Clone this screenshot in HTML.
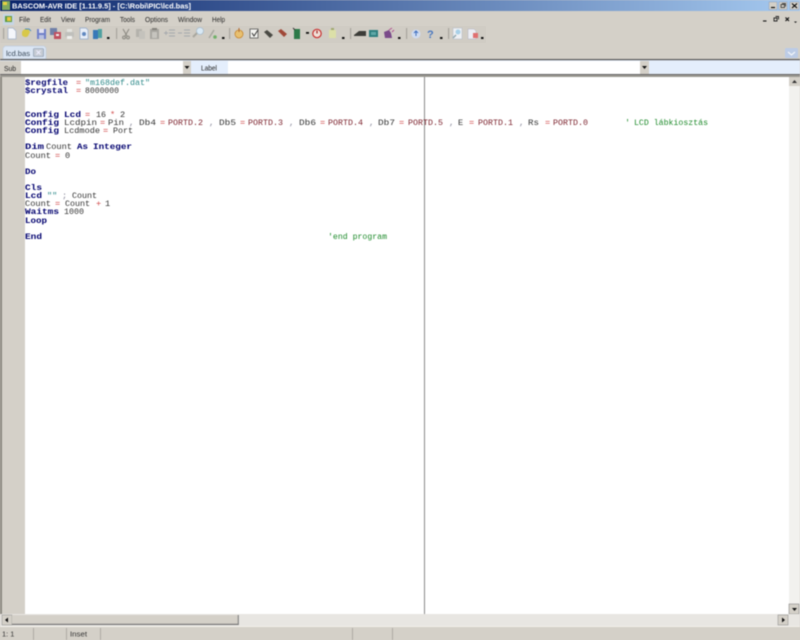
<!DOCTYPE html>
<html><head><meta charset="utf-8"><title>BASCOM-AVR IDE</title>
<style>
html,body{margin:0;padding:0;width:800px;height:640px;overflow:hidden;background:#d4d0c8}
svg{display:block;filter:blur(.4px)}
</style></head><body>
<svg width="800" height="640" viewBox="0 0 800 640" xmlns="http://www.w3.org/2000/svg">
<defs><linearGradient id="t" x1="0" x2="1" y1="0" y2="0"><stop offset="0" stop-color="#0a246a"/><stop offset="1" stop-color="#a6caf0"/></linearGradient></defs>
<rect width="800" height="640" fill="#d4d0c8"/>
<!-- title bar -->
<rect x="0" y="0" width="800" height="11" fill="url(#t)"/>
<rect x="2" y="1" width="8" height="9" fill="#7fa860"/><rect x="3" y="2" width="4" height="3" fill="#e8d040"/>
<text x="12" y="8.5" font-family="Liberation Sans,sans-serif" font-size="7.6" font-weight="bold" fill="#fff" textLength="179" lengthAdjust="spacingAndGlyphs">BASCOM-AVR IDE [1.11.9.5] - [C:\Robi\PIC\lcd.bas]</text>
<g fill="#d4d0c8" stroke="#8a94a8" stroke-width=".4"><rect x="769" y="2" width="8" height="7.500"/><rect x="779" y="2" width="8" height="7.500"/><rect x="790" y="2" width="9" height="7.500"/></g>
<path d="M771 7.500h4" stroke="#000" stroke-width="1.100"/><path d="M781 4.500h3.500v3h-3.500zM782 3.500h3.500v3" fill="none" stroke="#222" stroke-width=".7"/><path d="M792 3.500l5 4.500M797 3.500l-5 4.500" stroke="#000" stroke-width="1.100"/>
<!-- menu -->
<rect x="3" y="14" width="11" height="11" fill="#c6d5e4"/><rect x="5" y="16" width="7" height="6" fill="#5c9a40"/><rect x="7" y="17" width="4" height="4" fill="#e8c840"/>
<g font-family="Liberation Sans,sans-serif" font-size="7.4" fill="#2a2a2a">
<text x="19" y="22" textLength="11" lengthAdjust="spacingAndGlyphs">File</text>
<text x="40" y="22" textLength="11" lengthAdjust="spacingAndGlyphs">Edit</text>
<text x="61" y="22" textLength="14" lengthAdjust="spacingAndGlyphs">View</text>
<text x="85" y="22" textLength="25" lengthAdjust="spacingAndGlyphs">Program</text>
<text x="120" y="22" textLength="15" lengthAdjust="spacingAndGlyphs">Tools</text>
<text x="145" y="22" textLength="23" lengthAdjust="spacingAndGlyphs">Options</text>
<text x="178" y="22" textLength="24" lengthAdjust="spacingAndGlyphs">Window</text>
<text x="212" y="22" textLength="13" lengthAdjust="spacingAndGlyphs">Help</text>
</g>
<path d="M763 21h3.500" stroke="#111" stroke-width="1.100"/>
<path d="M774 18h3v3h-3zM775.500 16.500h3v3" fill="none" stroke="#222" stroke-width=".9"/>
<path d="M785.500 17.500l3.500 3.500M789 17.500l-3.500 3.500" stroke="#111" stroke-width="1.200"/>
<path d="M794 21.500h3l-1.500 1.500z" fill="#111"/>
<!-- toolbar strip -->
<rect x="0" y="26" width="486" height="17" fill="#d0ccc4"/>
<g fill="#a8a59e">
<rect x="3" y="28" width="1.200" height="11"/><rect x="116" y="28" width="1.200" height="11"/><rect x="229" y="28" width="1.200" height="11"/><rect x="350" y="28" width="1.200" height="11"/><rect x="406" y="28" width="1.200" height="11"/><rect x="448" y="28" width="1.200" height="11"/>
</g>
<!-- toolbar icons -->
<g transform="translate(0,-1)">
<path d="M8 29h5l3 3v8h-8z" fill="#f4f6fa" stroke="#a0b0c8" stroke-width=".7"/>
<path d="M22 33c1-3 5-4 7-2l1 2-2 4c-2 2-5 1-6-1z" fill="#d8c848"/><path d="M25 30l4 0 2 2" stroke="#5090c0" fill="none"/>
<rect x="37" y="30" width="9" height="10" fill="#7080c8"/><rect x="39" y="30" width="5" height="4" fill="#e0e0f0"/><rect x="39" y="36" width="5" height="4" fill="#b8c0e0"/>
<rect x="50" y="29" width="7" height="7" fill="#7080a8"/><rect x="54" y="33" width="7" height="7" fill="#c05060"/><rect x="56" y="35" width="3" height="2" fill="#eee"/>
<rect x="65" y="33" width="9" height="5" fill="#c0c0bc" rx="1"/><rect x="67" y="30" width="5" height="3" fill="#e4e4e0"/><rect x="67" y="37" width="5" height="3" fill="#f0f0ee"/>
<path d="M80 29h6l2 2v9h-8z" fill="#e8eef8" stroke="#90a8c8" stroke-width=".7"/><circle cx="84" cy="35" r="2" fill="#6088c0"/>
<rect x="93" y="31" width="5" height="9" fill="#3878b8"/><rect x="98" y="30" width="4" height="9" fill="#50a0a0"/>
<rect x="107" y="38" width="2.500" height="2" fill="#111"/>
<!-- cut copy paste etc -->
<path d="M123 30l4 7M129 30l-4 7" stroke="#8a8880" stroke-width="1"/><circle cx="124" cy="38.500" r="1.400" fill="none" stroke="#8a8880"/><circle cx="128" cy="38.500" r="1.400" fill="none" stroke="#8a8880"/>
<rect x="136" y="30" width="6" height="8" fill="#b4b2ac"/><rect x="139" y="32" width="6" height="8" fill="#c4c2bc"/>
<rect x="150" y="30" width="9" height="10" fill="#a8a6a0"/><rect x="152" y="29" width="5" height="2" fill="#85837d"/><rect x="152" y="33" width="5" height="6" fill="#c6c4be"/>
<g stroke="#a4a8ac" stroke-width=".9"><path d="M164 34h4M166 32v4M169 31h6M169 34h6M169 37h6"/><path d="M178 34h4M184 31h6M184 34h6M184 37h6"/></g>
<path d="M193 38l4-4" stroke="#a8a69e" stroke-width="2"/><circle cx="200" cy="32" r="3.500" fill="#d8e8f4" stroke="#a8bccc" stroke-width=".8"/>
<path d="M209 39l5-8" stroke="#a8a8a0" stroke-width="1.500"/><circle cx="215" cy="38" r="1.800" fill="#70b068"/>
<rect x="222" y="38" width="2.500" height="2" fill="#111"/>
<circle cx="239" cy="35" r="4" fill="#e8c070" stroke="#c88830" stroke-width=".8"/><path d="M239 29v4" stroke="#b06830"/>
<rect x="250" y="30" width="8" height="9" fill="#f4f4f0" stroke="#555" stroke-width=".8"/><path d="M252 34l2 3 4-6" stroke="#333" fill="none"/>
<path d="M264 33l3-2 6 5-3 3z" fill="#4a4a44"/>
<path d="M278 32l3-2 6 5-3 3z" fill="#a04838"/>
<rect x="294" y="30" width="6" height="10" fill="#2c7a48"/><path d="M293 29l2 2" stroke="#333"/>
<rect x="306" y="33" width="3" height="1.800" fill="#111"/>
<circle cx="317" cy="34.500" r="4.200" fill="#f0e0d8" stroke="#c83030" stroke-width="1.200"/><path d="M317 31.500v3" stroke="#a02020" stroke-width="1.200"/>
<rect x="329" y="31" width="7" height="8" fill="#dce0a8"/><rect x="331" y="29" width="3" height="2" fill="#a0a870"/>
<rect x="342" y="38" width="2.500" height="2" fill="#111"/>
<path d="M354 36l5-4h7v5h-12z" fill="#3c3c38"/>
<rect x="369" y="31" width="9" height="7" fill="#2f7f80"/><rect x="371" y="33" width="5" height="3" fill="#60a8a8"/>
<path d="M384 33l5-2 2 3 1 5h-7z" fill="#7a4a8a"/><path d="M389 31l3-2M392 33l2-2" stroke="#b05090"/>
<rect x="398" y="38" width="2.500" height="2" fill="#111"/>
<circle cx="416" cy="35" r="4.500" fill="#d0dcf0"/><path d="M416 32v5M414 34l2-2 2 2" stroke="#4070c0" fill="none"/>
<text x="427" y="39" font-family="Liberation Sans,sans-serif" font-size="11" font-weight="bold" fill="#4a78c0">?</text>
<rect x="440" y="38" width="2.500" height="2" fill="#111"/>
<rect x="453" y="29" width="9" height="11" fill="#eef0f4" stroke="#b0b8c4" stroke-width=".5"/><circle cx="458" cy="33" r="2.500" fill="#a8d0e8"/><path d="M456 36l-3 3" stroke="#90a8b0" stroke-width="1.500"/>
<path d="M468 30h6l2 2v8h-8z" fill="#eceef4" stroke="#b0b0c0" stroke-width=".5"/><rect x="473" y="34" width="5" height="5" fill="#e07070"/>
<rect x="481" y="38" width="2.500" height="2" fill="#111"/>
</g>
<!-- tab -->
<path d="M3 59v-11l2-2h39l2 2v11z" fill="#dbe6f4" stroke="#c0ccdc" stroke-width=".7"/>
<text x="6" y="56" font-family="Liberation Sans,sans-serif" font-size="7.6" fill="#3c4c5c" textLength="24" lengthAdjust="spacingAndGlyphs">lcd.bas</text>
<rect x="33.500" y="48.500" width="10" height="8" rx="1" fill="#c6ccd4" stroke="#8090a8" stroke-width=".6"/><path d="M36.500 50.500l4 4M40.500 50.500l-4 4" stroke="#eef" stroke-width="1"/>
<rect x="785" y="48" width="13" height="10" rx="1" fill="#bccce6"/><path d="M788 52l3.500 3 3.500-3" fill="none" stroke="#f4f6fa" stroke-width="1.200"/>
<!-- sub bar -->
<rect x="0" y="60" width="800" height="15" fill="#e4eefc"/>
<rect x="0" y="59" width="800" height="1.200" fill="#555"/>
<rect x="0" y="74" width="800" height="1.200" fill="#666"/>
<rect x="0" y="61" width="21" height="13" fill="#d4d0c8"/>
<text x="4" y="71" font-family="Liberation Sans,sans-serif" font-size="7.4" fill="#222" textLength="12" lengthAdjust="spacingAndGlyphs">Sub</text>
<rect x="21" y="61" width="162" height="13" fill="#fff"/>
<rect x="183" y="61" width="8" height="13" fill="#d4d0c8"/><path d="M184.500 66h5l-2.500 3z" fill="#111"/>
<text x="201" y="70.500" font-family="Liberation Sans,sans-serif" font-size="7.400" fill="#222" textLength="16" lengthAdjust="spacingAndGlyphs">Label</text>
<rect x="228" y="61" width="412" height="13" fill="#fff"/>
<rect x="640" y="61" width="9" height="13" fill="#d4d0c8"/><path d="M642 66h5l-2.500 3z" fill="#111"/>
<!-- editor -->
<rect x="0" y="75" width="800" height="2" fill="#9a9892"/>
<rect x="25" y="77" width="764" height="537" fill="#fff"/>
<rect x="0" y="77" width="2" height="537" fill="#8a8880"/>
<rect x="2" y="77" width="23" height="537" fill="#d4d0c8"/>
<rect x="424" y="77" width="1" height="537" fill="#8a8a8a"/>
<g font-family="Liberation Mono,monospace" font-size="8.600" fill="#333">
<g font-weight="bold" fill="#00006e"><text x="25" y="85" textLength="43" lengthAdjust="spacingAndGlyphs">$regfile</text><text x="25" y="93" textLength="43" lengthAdjust="spacingAndGlyphs">$crystal</text>
<text x="25" y="117" textLength="34" lengthAdjust="spacingAndGlyphs">Config</text><text x="64" y="117" textLength="17" lengthAdjust="spacingAndGlyphs">Lcd</text>
<text x="25" y="125" textLength="34" lengthAdjust="spacingAndGlyphs">Config</text>
<text x="25" y="133" textLength="34" lengthAdjust="spacingAndGlyphs">Config</text>
<text x="25" y="149" textLength="19" lengthAdjust="spacingAndGlyphs">Dim</text><text x="77" y="149" textLength="11" lengthAdjust="spacingAndGlyphs">As</text><text x="93" y="149" textLength="39" lengthAdjust="spacingAndGlyphs">Integer</text>
<text x="25" y="174" textLength="11" lengthAdjust="spacingAndGlyphs">Do</text>
<text x="25" y="190" textLength="17" lengthAdjust="spacingAndGlyphs">Cls</text>
<text x="25" y="198" textLength="17" lengthAdjust="spacingAndGlyphs">Lcd</text>
<text x="25" y="214" textLength="34" lengthAdjust="spacingAndGlyphs">Waitms</text>
<text x="25" y="223" textLength="22" lengthAdjust="spacingAndGlyphs">Loop</text>
<text x="25" y="239" textLength="17" lengthAdjust="spacingAndGlyphs">End</text></g>
<g fill="#d04848"><text x="76" y="85">=</text><text x="76" y="93">=</text><text x="85" y="117">=</text><text x="110" y="117">*</text><text x="100" y="125">=</text><text x="160" y="125">=</text><text x="240" y="125">=</text><text x="320" y="125">=</text><text x="399" y="125">=</text><text x="469" y="125">=</text><text x="545" y="125">=</text><text x="103" y="133">=</text><text x="55" y="158">=</text><text x="55" y="206">=</text><text x="96" y="206">+</text></g>
<g fill="#2e8a8a"><text x="85" y="85" textLength="65" lengthAdjust="spacingAndGlyphs">"m168def.dat"</text><text x="47" y="198">""</text></g>
<text x="85" y="93" textLength="34" lengthAdjust="spacingAndGlyphs">8000000</text>
<text x="96" y="117" textLength="10" lengthAdjust="spacingAndGlyphs">16</text><text x="120" y="117">2</text>
<text x="64" y="125" textLength="33" lengthAdjust="spacingAndGlyphs">Lcdpin</text><text x="108" y="125" textLength="16" lengthAdjust="spacingAndGlyphs">Pin</text>
<g fill="#88889a"><text x="129" y="125">,</text><text x="209" y="125">,</text><text x="289" y="125">,</text><text x="369" y="125">,</text><text x="449" y="125">,</text><text x="519" y="125">,</text><text x="62" y="198">;</text></g>
<text x="139" y="125" textLength="17" lengthAdjust="spacingAndGlyphs">Db4</text><text x="219" y="125" textLength="17" lengthAdjust="spacingAndGlyphs">Db5</text><text x="299" y="125" textLength="17" lengthAdjust="spacingAndGlyphs">Db6</text><text x="378" y="125" textLength="17" lengthAdjust="spacingAndGlyphs">Db7</text><text x="458" y="125">E</text><text x="528" y="125" textLength="11" lengthAdjust="spacingAndGlyphs">Rs</text>
<g fill="#7a1f2a"><text x="168" y="125" textLength="35" lengthAdjust="spacingAndGlyphs">PORTD.2</text><text x="248" y="125" textLength="35" lengthAdjust="spacingAndGlyphs">PORTD.3</text><text x="328" y="125" textLength="35" lengthAdjust="spacingAndGlyphs">PORTD.4</text><text x="408" y="125" textLength="35" lengthAdjust="spacingAndGlyphs">PORTD.5</text><text x="478" y="125" textLength="35" lengthAdjust="spacingAndGlyphs">PORTD.1</text><text x="553" y="125" textLength="35" lengthAdjust="spacingAndGlyphs">PORTD.0</text></g>
<g fill="#1d8a2a"><text x="625" y="125">'</text><text x="634" y="125" textLength="74" lengthAdjust="spacingAndGlyphs">LCD lábkiosztás</text><text x="328" y="239" textLength="59" lengthAdjust="spacingAndGlyphs">'end program</text></g>
<text x="64" y="133" textLength="36" lengthAdjust="spacingAndGlyphs">Lcdmode</text><text x="113" y="133" textLength="20" lengthAdjust="spacingAndGlyphs">Port</text>
<text x="46" y="149" textLength="26" lengthAdjust="spacingAndGlyphs">Count</text>
<text x="25" y="158" textLength="26" lengthAdjust="spacingAndGlyphs">Count</text><text x="65" y="158">0</text>
<text x="72" y="198" textLength="25" lengthAdjust="spacingAndGlyphs">Count</text>
<text x="25" y="206" textLength="26" lengthAdjust="spacingAndGlyphs">Count</text><text x="65" y="206" textLength="25" lengthAdjust="spacingAndGlyphs">Count</text><text x="105" y="206">1</text>
<text x="64" y="214" textLength="20" lengthAdjust="spacingAndGlyphs">1000</text>
</g>
<!-- v scrollbar -->
<rect x="789" y="77" width="11" height="537" fill="#f2f1ee"/>
<rect x="789" y="77" width="11" height="9" fill="#d4d0c8"/>
<path d="M792 83h5l-2.500-3z" fill="#333"/>
<rect x="789" y="604" width="10" height="10" fill="#d4d0c8" stroke="#777" stroke-width=".5"/>
<path d="M792 608h5l-2.500 3z" fill="#111"/>
<!-- h scrollbar -->
<rect x="0" y="614" width="800" height="12" fill="#e8e6e2"/>
<rect x="2" y="615" width="10" height="10" fill="#d4d0c8" stroke="#888" stroke-width=".5"/>
<path d="M8 617.500v5l-3-2.500z" fill="#111"/>
<rect x="12" y="615" width="226" height="10" fill="#d4d0c8"/>
<rect x="12" y="623.800" width="226" height="1.200" fill="#777"/><rect x="237.800" y="615" width="1" height="10" fill="#777"/>
<rect x="778" y="615" width="10" height="10" fill="#d4d0c8" stroke="#888" stroke-width=".5"/>
<path d="M782 617.500v5l3-2.500z" fill="#111"/>
<rect x="0" y="626" width="800" height="1" fill="#f2f0ea"/>
<!-- status bar -->
<rect x="0" y="627" width="800" height="13" fill="#d4d0c8"/>
<g fill="#aeaba4"><rect x="33" y="628" width="1" height="12"/><rect x="66" y="628" width="1" height="12"/><rect x="100" y="628" width="1" height="12"/><rect x="352" y="628" width="1" height="12"/><rect x="392" y="628" width="1" height="12"/></g>
<g font-family="Liberation Sans,sans-serif" font-size="7.400" fill="#333"><text x="2" y="636.500">1: 1</text><text x="70" y="636.500" textLength="17" lengthAdjust="spacingAndGlyphs">Inset</text></g>
</svg>
</body></html>
